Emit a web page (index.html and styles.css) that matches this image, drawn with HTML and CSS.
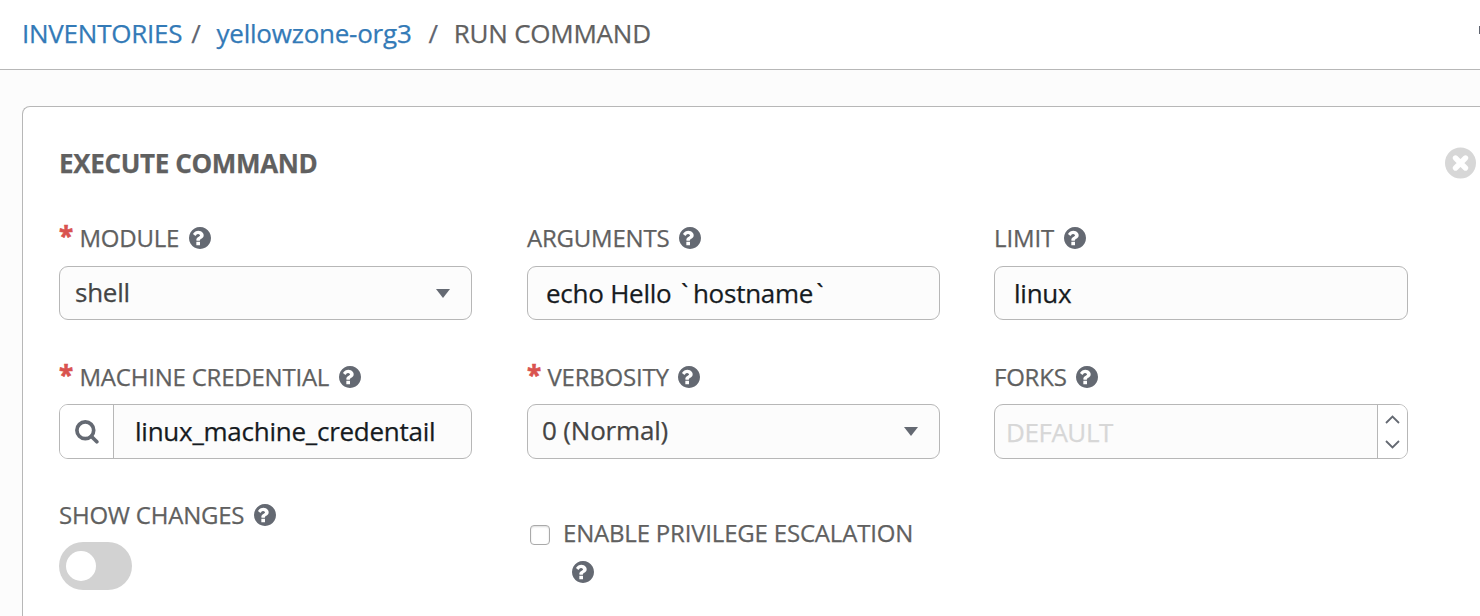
FILE: index.html
```html
<!DOCTYPE html>
<html lang="en">
<head>
<meta charset="utf-8">
<title>Run Command</title>
<link rel="stylesheet" href="styles.css">
</head>
<body>
<svg class="sprite" aria-hidden="true">
  <symbol id="help" viewBox="128 128 1536 1536"><path d="M896 1376v-192q0-14-9-23t-23-9h-192q-14 0-23 9t-9 23v192q0 14 9 23t23 9h192q14 0 23-9t9-23zm256-672q0-88-55.500-163t-138.500-116-170-41q-243 0-371 213-15 24 8 42l132 100q7 6 19 6 16 0 25-12 53-68 86-92 34-24 86-24 48 0 85.500 26t37.500 59q0 38-20 61t-68 45q-63 28-115.500 86.500t-52.500 125.500v36q0 14 9 23t23 9h192q14 0 23-9t9-23q0-19 21.500-49.500t54.500-49.500q32-18 49-28.500t46-35 44.500-48 28-60.500 12.500-81zm512 192q0 209-103 385.500t-279.500 279.500-385.500 103-385.500-103-279.500-279.500-103-385.500 103-385.500 279.500-279.500 385.500-103 385.500 103 279.500 279.500 103 385.500z"/></symbol>
</svg>
<header class="topbar">
  <nav class="crumbs">
    <a class="link">INVENTORIES</a><span class="sep first">/</span><a class="link">yellowzone-org3</a><span class="sep second">/</span><span class="current">RUN COMMAND</span>
  </nav>
  <span class="edge-icon"></span>
</header>
<main class="panel">
  <div class="panel-head">
    <h1 class="title">EXECUTE COMMAND</h1>
    <svg class="close" viewBox="0 0 31 32"><circle cx="15.500" cy="16" r="15.500" fill="#d7d7d7"/><path d="M10.500 11l10 10M20.500 11l-10 10" stroke="#fff" stroke-width="5.400" stroke-linecap="round"/></svg>
  </div>
  <form class="form">
    <div class="field">
      <div class="label"><span class="star">*</span><span>MODULE</span><svg class="help"><use href="#help"/></svg></div>
      <div class="control select"><span>shell</span><i class="caret"></i></div>
    </div>
    <div class="field">
      <div class="label"><span>ARGUMENTS</span><svg class="help"><use href="#help"/></svg></div>
      <div class="control input"><span>echo Hello <span class="tick-open">`</span>hostname<span class="tick-close">`</span></span></div>
    </div>
    <div class="field wide">
      <div class="label limit"><span>LIMIT</span><svg class="help"><use href="#help"/></svg></div>
      <div class="control input limit-value"><span>linux</span></div>
    </div>
    <div class="field">
      <div class="label near"><span class="star">*</span><span>MACHINE CREDENTIAL</span><svg class="help"><use href="#help"/></svg></div>
      <div class="control tall lookup">
        <span class="lookup-btn"><svg class="search" viewBox="0 0 24 24"><circle cx="10.300" cy="10.300" r="8.400"/><path d="M16.500 16.500l5.300 5.300"/></svg></span>
        <span class="lookup-value">linux_machine_credentail</span>
      </div>
    </div>
    <div class="field">
      <div class="label near"><span class="star">*</span><span>VERBOSITY</span><svg class="help"><use href="#help"/></svg></div>
      <div class="control tall select verbosity"><span>0 (Normal)</span><i class="caret"></i></div>
    </div>
    <div class="field wide">
      <div class="label near"><span>FORKS</span><svg class="help"><use href="#help"/></svg></div>
      <div class="control tall spinner">
        <span class="placeholder">DEFAULT</span>
        <span class="steps">
          <svg class="chev" viewBox="0 0 15 9"><path d="M1 8l6.500-6.500L14 8"/></svg>
          <svg class="chev" viewBox="0 0 15 9"><path d="M1 1l6.500 6.500L14 1"/></svg>
        </span>
      </div>
    </div>
    <div class="field">
      <div class="label near"><span>SHOW CHANGES</span><svg class="help"><use href="#help"/></svg></div>
      <div class="toggle"><i class="knob"></i></div>
    </div>
    <div class="field escalation">
      <span class="checkbox"></span>
      <div class="label-stack"><span>ENABLE PRIVILEGE ESCALATION</span><svg class="help"><use href="#help"/></svg></div>
    </div>
  </form>
</main>
</body>
</html>
```
FILE: styles.css
```css
* { box-sizing: border-box; }
html, body { height: 616px; overflow: hidden; }
body { display: flex; flex-direction: column; margin: 0; background: #fcfcfc; font-family: "Open Sans", sans-serif; color: #606060; white-space: nowrap; -webkit-text-stroke: 0.25px currentColor; }
.sprite { display: none; }

.topbar { display: flex; justify-content: space-between; flex: none; height: 70px; border-bottom: 1px solid #b7b7b7; background: #fff; }
.crumbs { display: flex; padding: 15px 0 0 22px; font-size: 26px; line-height: 36px; letter-spacing: -0.24px; color: #606060; }
.link { color: #337ab7; }
.sep { color: #606570; }
.first { margin: 0 16px 0 9px; }
.second { margin: 0 16px 0 17px; }
.edge-icon { width: 1px; height: 8px; margin-top: 26px; background: #606570; }

.panel { flex: 1; min-height: 0; margin: 36px 0 0 22px; border: 1px solid #b7b7b7; border-width: 1px 0 0 1px; border-radius: 8px 0 0 0; background: #fff; padding: 38px 0 0 36px; }
.panel-head { display: flex; justify-content: space-between; width: 1417px; height: 77px; }
.title { margin: 0; font-size: 26px; line-height: 36px; font-weight: 700; letter-spacing: -0.35px; color: #606060; }
.close { width: 31px; height: 32px; margin-top: 2px; }

.form { display: grid; grid-template-columns: 468px 467px 414px; grid-template-rows: 139px 138px 112px; }
.field { width: 413px; }
.wide { width: 414px; }
.label { display: flex; align-items: center; height: 32px; margin-bottom: 12px; font-size: 24px; line-height: 32px; letter-spacing: -0.22px; }
.limit { letter-spacing: -0.1px; }
.near { margin-bottom: 11px; }
.star { width: 20.5px; height: 38px; font-size: 26px; line-height: 34px; color: #d9534f; font-weight: 700; -webkit-text-stroke-width: 0.6px; }
.help { width: 22px; height: 22px; margin-left: 9.5px; fill: #646972; flex: none; }
.control { display: flex; align-items: center; height: 54px; border: 1px solid #b7b7b7; border-radius: 9px; background: #fcfcfc; font-size: 26px; line-height: 36px; letter-spacing: -0.25px; color: #161b1f; }
.tall { height: 55px; }
.select { justify-content: space-between; padding: 0 21px 2px 15px; color: #444; }
.verbosity { padding-left: 14px; letter-spacing: -0.18px; }
.verbosity span { margin-bottom: 2px; }
.caret { border: 7px solid transparent; border-top: 9px solid #646972; border-bottom: 0; margin-top: 2px; }
.input { padding-left: 18px; }
.limit-value { padding-left: 19px; }
.tick-open { margin: 0 5px 0 3px; }
.tick-close { margin-left: 3px; }
.lookup-btn { display: flex; align-items: center; justify-content: center; width: 54px; height: 100%; border-right: 1px solid #b7b7b7; border-radius: 8px 0 0 8px; background: #fff; }
.search { width: 24px; height: 24px; fill: none; stroke: #646972; stroke-width: 3.7; stroke-linecap: round; }
.lookup-value { padding: 0 0 1px 21px; }
.spinner { justify-content: space-between; padding-left: 11px; }
.placeholder { color: #d7d7d7; letter-spacing: -0.45px; }
.steps { display: flex; flex-direction: column; align-items: center; justify-content: space-between; width: 30px; height: 100%; padding: 10px 0 9px; border-left: 1px solid #b7b7b7; border-radius: 0 8px 8px 0; background: #fff; }
.chev { width: 15px; height: 9px; fill: none; stroke: #646972; stroke-width: 1.8; }
.toggle { display: flex; align-items: center; width: 73px; height: 48px; padding-left: 7px; border-radius: 24px; background: #d2d2d2; }
.knob { width: 30px; height: 30px; border-radius: 50%; background: #fff; }
.escalation { display: flex; padding: 18px 0 0 3px; }
.checkbox { width: 20px; height: 20px; margin: 8px 13px 0 0; border: 1px solid #aaa; border-radius: 4px; background: #fff; box-shadow: inset 0 1px 2px #ddd; }
.label-stack { display: flex; flex-direction: column; font-size: 24px; line-height: 32px; letter-spacing: -0.19px; }
.label-stack .help { margin-top: 12px; margin-left: 9px; }
```
